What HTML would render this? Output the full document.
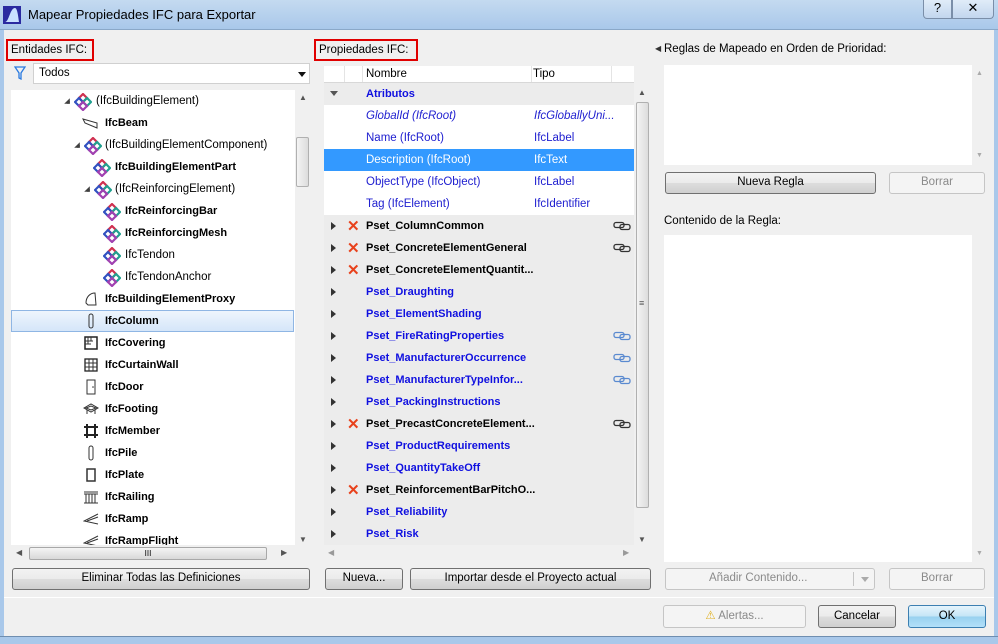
<!DOCTYPE html>
<html><head><meta charset="utf-8"><style>
*{box-sizing:border-box;margin:0;padding:0}
body{width:998px;height:644px;overflow:hidden;background:#f0f0f0;font-family:"Liberation Sans",sans-serif;font-size:11.5px;color:#000;position:relative}
.a{position:absolute;white-space:nowrap}
.title{left:0;top:0;width:998px;height:30px;background:linear-gradient(#c4daf0,#a9c8ea);border-bottom:1px solid #8aa8c8}
.red{border:2px solid #e00000;background:#f0f0f0;padding:3px 3px;font-size:11.5px;white-space:nowrap;overflow:hidden}
.btn{border:1px solid #707070;border-radius:3px;background:linear-gradient(#f2f2f2 0%,#ebebeb 50%,#dddddd 51%,#cfcfcf 100%);text-align:center;line-height:19px}
.dis{border:1px solid #c5c5c5;border-radius:3px;background:#f4f4f4;color:#8a8a8a;text-align:center;line-height:19px}
.white{background:#fff}
.t{position:absolute;white-space:nowrap;line-height:22px;height:22px}
.b{font-weight:bold;font-size:11px}
.tri{position:absolute;width:0;height:0;border-left:4px solid transparent;border-top:4px solid transparent;border-bottom:4px solid #404040;border-right:4px solid #404040;transform:scale(.7)}
.ic{position:absolute;width:16px;height:16px}
.ptri{position:absolute;width:0;height:0;border-top:4px solid transparent;border-bottom:4px solid transparent;border-left:5px solid #333}
.x{position:absolute;color:#e8421c;font-weight:bold;font-size:15px}
.blue{color:#1010e0}
.link{position:absolute}
.sb{background:#f0f0f0}
</style></head><body>
<div class="a title"></div>
<svg class="a" style="left:3px;top:6px" width="18" height="18"><rect width="18" height="18" fill="#2a2aa0"/><path d="M2 16 C6 16 7 2 12 2 C14 2 15 8 16 16Z" fill="#c8e0ff"/></svg>
<div class="a" style="left:28px;top:7px;font-size:13px">Mapear Propiedades IFC para Exportar</div>
<div class="a" style="left:923px;top:0;width:29px;height:19px;border:1px solid #7a8ea8;border-top:none;border-radius:0 0 0 4px;text-align:center;font-size:13px;background:linear-gradient(#e0ecf8,#c2d6ee)">?</div>
<div class="a" style="left:952px;top:0;width:42px;height:19px;border:1px solid #7a8ea8;border-top:none;border-radius:0 0 4px 0;text-align:center;font-size:13px;background:linear-gradient(#e0ecf8,#c2d6ee)">✕</div>
<div class="a" style="left:0;top:30px;width:4px;height:614px;background:#a9c8ea"></div>
<div class="a" style="left:994px;top:30px;width:4px;height:614px;background:#a9c8ea"></div>
<div class="a" style="left:0;top:636px;width:998px;height:8px;background:#a9c8ea;border-top:1px solid #6f8eb0"></div>

<!-- LEFT -->
<div class="a red" style="left:6px;top:39px;width:88px;height:22px">Entidades IFC:</div>
<svg class="a" style="left:14px;top:66px" width="12" height="14"><path d="M1 1H11L7 7V13L5 12V7Z" fill="none" stroke="#2a7ae0" stroke-width="1.3"/></svg>
<div class="a white" style="left:33px;top:63px;width:277px;height:21px;border:1px solid #d0d0d0;padding:3px 5px">Todos</div>
<div class="a" style="left:298px;top:72px;border-left:4px solid transparent;border-right:4px solid transparent;border-top:5px solid #111"></div>
<div class="a white" style="left:11px;top:90px;width:284px;height:455px;overflow:hidden" id="treebox"></div>
<div class="a sb" style="left:295px;top:90px;width:15px;height:455px"></div>
<div class="a" style="left:296px;top:137px;width:13px;height:50px;border:1px solid #b0b0b0;border-radius:2px;background:linear-gradient(90deg,#f4f4f4,#dcdcdc)"></div>
<div class="a" style="left:299px;top:93px;font-size:8px;color:#555">▲</div>
<div class="a" style="left:299px;top:535px;font-size:8px;color:#555">▼</div>
<div class="a sb" style="left:11px;top:545px;width:299px;height:16px"></div>
<div class="a" style="left:29px;top:547px;width:238px;height:13px;border:1px solid #a8a8a8;border-radius:2px;background:linear-gradient(#f4f4f4,#d8d8d8);text-align:center;font-size:8px;line-height:11px">III</div>
<div class="a" style="left:16px;top:548px;font-size:8px;color:#555">◀</div>
<div class="a" style="left:281px;top:548px;font-size:8px;color:#555">▶</div>
<div class="a btn" style="left:12px;top:568px;width:298px;height:22px">Eliminar Todas las Definiciones</div>

<!-- MIDDLE -->
<div class="a red" style="left:314px;top:39px;width:104px;height:22px">Propiedades IFC:</div>
<div class="a white" style="left:324px;top:66px;width:310px;height:17px;border-bottom:1px solid #d8d8d8"></div>
<div class="a" style="left:344px;top:66px;width:1px;height:16px;background:#e4e4e4"></div>
<div class="a" style="left:362px;top:66px;width:1px;height:16px;background:#e4e4e4"></div>
<div class="a" style="left:531px;top:66px;width:1px;height:16px;background:#e4e4e4"></div>
<div class="a" style="left:611px;top:66px;width:1px;height:16px;background:#e4e4e4"></div>
<div class="a" style="left:366px;top:68px">Nombre</div>
<div class="a" style="left:533px;top:68px">Tipo</div>
<div class="a" style="left:324px;top:83px;width:310px;height:462px;background:#ececec"></div>
<div class="a white" style="left:324px;top:105px;width:310px;height:110px"></div>
<div class="a" style="left:324px;top:149px;width:310px;height:22px;background:#3399ff"></div>
<div class="a sb" style="left:634px;top:83px;width:16px;height:462px"></div>
<div class="a" style="left:636px;top:102px;width:13px;height:406px;border:1px solid #b0b0b0;border-radius:2px;background:linear-gradient(90deg,#f4f4f4,#dcdcdc)"></div>
<div class="a" style="left:639px;top:298px;font-size:9px;color:#555">≡</div>
<div class="a" style="left:638px;top:88px;font-size:8px;color:#555">▲</div>
<div class="a" style="left:638px;top:535px;font-size:8px;color:#555">▼</div>
<div class="a sb" style="left:324px;top:545px;width:326px;height:16px"></div>
<div class="a" style="left:328px;top:548px;font-size:8px;color:#999">◀</div>
<div class="a" style="left:623px;top:548px;font-size:8px;color:#999">▶</div>
<div id="props"></div>
<div class="a btn" style="left:325px;top:568px;width:78px;height:22px">Nueva...</div>
<div class="a btn" style="left:410px;top:568px;width:241px;height:22px">Importar desde el Proyecto actual</div>

<!-- RIGHT -->
<div class="a" style="left:655px;top:44px;font-size:8px;color:#333">◀</div>
<div class="a" style="left:664px;top:43px">Reglas de Mapeado en Orden de Prioridad:</div>
<div class="a white" style="left:664px;top:65px;width:308px;height:100px"></div>
<div class="a sb" style="left:972px;top:65px;width:14px;height:100px"></div>
<div class="a" style="left:976px;top:70px;font-size:7px;color:#aaa">▲</div>
<div class="a" style="left:976px;top:152px;font-size:7px;color:#aaa">▼</div>
<div class="a btn" style="left:665px;top:172px;width:211px;height:22px">Nueva Regla</div>
<div class="a dis" style="left:889px;top:172px;width:96px;height:22px">Borrar</div>
<div class="a" style="left:664px;top:215px">Contenido de la Regla:</div>
<div class="a white" style="left:664px;top:235px;width:308px;height:327px"></div>
<div class="a sb" style="left:972px;top:235px;width:14px;height:327px"></div>
<div class="a" style="left:976px;top:550px;font-size:7px;color:#aaa">▼</div>
<div class="a dis" style="left:665px;top:568px;width:210px;height:22px;text-align:left;padding-left:43px">Añadir Contenido...</div>
<div class="a" style="left:853px;top:572px;width:1px;height:14px;background:#c5c5c5"></div>
<div class="a" style="left:861px;top:577px;border-left:4px solid transparent;border-right:4px solid transparent;border-top:5px solid #aaa"></div>
<div class="a dis" style="left:889px;top:568px;width:96px;height:22px">Borrar</div>

<div class="a" style="left:4px;top:597px;width:990px;height:1px;background:#a0a0a0;border-bottom:1px solid #fff"></div>
<div class="a dis" style="left:663px;top:605px;width:143px;height:23px;line-height:21px"><span style="color:#e0b020">⚠</span> Alertas...</div>
<div class="a btn" style="left:818px;top:605px;width:78px;height:23px;line-height:21px">Cancelar</div>
<div class="a btn" style="left:908px;top:605px;width:78px;height:23px;line-height:21px;border-color:#3c7fb1;background:linear-gradient(#e5f4fc,#c4e5f6 50%,#98d1ef 51%,#b3e0f9)">OK</div>

<script>
var T=document.getElementById('treebox'),h='';
var ifc='<svg width="18" height="18" viewBox="0 0 18 18"><path d="M9 1L13 5L9 9L5 5Z" fill="none" stroke="#d03050" stroke-width="2.2"/><path d="M5 5L9 9L5 13L1 9Z" fill="none" stroke="#3050c0" stroke-width="2.2"/><path d="M13 5L17 9L13 13L9 9Z" fill="none" stroke="#20a090" stroke-width="2.2"/><path d="M9 9L13 13L9 17L5 13Z" fill="none" stroke="#a040b0" stroke-width="2.2"/></svg>';
var icons={
Beam:'<path d="M1 4L15 8L15 13L3 8Z" fill="none" stroke="#333"/>',
Proxy:'<path d="M3 12C3 6 7 2 12 2L13 14L5 14Z" fill="none" stroke="#333"/>',
Column:'<rect x="6" y="1" width="4" height="14" rx="2" fill="none" stroke="#333"/>',
Covering:'<rect x="2" y="2" width="12" height="12" fill="none" stroke="#222" stroke-width="1.5"/><path d="M2 6H10M2 9H8M5 2V9M8 2V6" stroke="#333"/>',
CurtainWall:'<rect x="2" y="2" width="12" height="12" fill="none" stroke="#222" stroke-width="1.3"/><path d="M2 6H14M2 10H14M6 2V14M10 2V14" stroke="#333"/>',
Door:'<rect x="4" y="1" width="8" height="14" fill="none" stroke="#333"/><circle cx="10" cy="8" r=".8" fill="#333"/>',
Footing:'<path d="M1 7L8 3L15 7L8 11Z" fill="none" stroke="#333"/><path d="M3 7L8 5L13 7L8 9Z" fill="none" stroke="#333"/><path d="M4 9V13M12 9V13" stroke="#333"/>',
Member:'<path d="M4 1V15M12 1V15M1 4H15M1 12H15" stroke="#222" stroke-width="2"/>',
Pile:'<rect x="6" y="1" width="4" height="14" rx="2" fill="none" stroke="#333"/>',
Plate:'<path d="M4 2H12V14H4Z" fill="none" stroke="#333" stroke-width="1.5"/>',
Railing:'<path d="M1 3H15M1 5H15M3 5V14M6 5V14M9 5V14M12 5V14M1 14H15" stroke="#333"/>',
Ramp:'<path d="M15 3L1 10L15 13M15 6L4 10" fill="none" stroke="#333"/>',
RampFlight:'<path d="M15 3L1 10L15 13M15 6L4 10" fill="none" stroke="#333"/>'};
var rows=[[52,63,85,'(IfcBuildingElement)',0,1],[0,71,94,'IfcBeam',1,'Beam'],[62,73,94,'(IfcBuildingElementComponent)',0,1],[0,82,104,'IfcBuildingElementPart',1,1],[72,83,104,'(IfcReinforcingElement)',0,1],[0,92,114,'IfcReinforcingBar',1,1],[0,92,114,'IfcReinforcingMesh',1,1],[0,92,114,'IfcTendon',0,1],[0,92,114,'IfcTendonAnchor',0,1],
[0,72,94,'IfcBuildingElementProxy',1,'Proxy'],[0,72,94,'IfcColumn',1,'Column'],[0,72,94,'IfcCovering',1,'Covering'],[0,72,94,'IfcCurtainWall',1,'CurtainWall'],[0,72,94,'IfcDoor',1,'Door'],[0,72,94,'IfcFooting',1,'Footing'],[0,72,94,'IfcMember',1,'Member'],[0,72,94,'IfcPile',1,'Pile'],[0,72,94,'IfcPlate',1,'Plate'],[0,72,94,'IfcRailing',1,'Railing'],[0,72,94,'IfcRamp',1,'Ramp'],[0,72,94,'IfcRampFlight',1,'RampFlight']];
h+='<div style="position:absolute;left:0;top:220px;width:283px;height:22px;background:linear-gradient(#eef5fd,#d5e6f9);border:1px solid #8fb6e4"></div>';
rows.forEach(function(r,i){var y=i*22;
 if(r[0])h+='<div class="tri" style="left:'+r[0]+'px;top:'+(y+7)+'px"></div>';
 var ic=r[5]===1?ifc:'<svg width="16" height="16">'+icons[r[5]]+'</svg>';
 h+='<div class="ic" style="left:'+r[1]+'px;top:'+(y+3)+'px">'+ic+'</div>';
 h+='<div class="t'+(r[4]?' b':'')+'" style="left:'+r[2]+'px;top:'+y+'px">'+r[3]+'</div>';});
T.innerHTML=h;
var P=document.getElementById('props');h='';
h+='<div class="a" style="left:330px;top:91px;border-left:4px solid transparent;border-right:4px solid transparent;border-top:5px solid #555"></div><div class="t b blue" style="left:366px;top:83px">Atributos</div>';
var at=[['GlobalId (IfcRoot)','IfcGloballyUni...',1],['Name (IfcRoot)','IfcLabel'],['Description (IfcRoot)','IfcText'],['ObjectType (IfcObject)','IfcLabel'],['Tag (IfcElement)','IfcIdentifier']];
at.forEach(function(a,i){var y=105+i*22,c=i==2?'color:#fff':'color:#2020d0';h+='<div class="t" style="left:366px;top:'+y+'px;'+c+(a[2]?';font-style:italic':'')+'">'+a[0]+'</div><div class="t" style="left:534px;top:'+y+'px;'+c+(a[2]?';font-style:italic':'')+'">'+a[1]+'</div>';});
var ps=[['Pset_ColumnCommon',1,1],['Pset_ConcreteElementGeneral',1,1],['Pset_ConcreteElementQuantit...',1,0],['Pset_Draughting',0,0],['Pset_ElementShading',0,0],['Pset_FireRatingProperties',0,2],['Pset_ManufacturerOccurrence',0,2],['Pset_ManufacturerTypeInfor...',0,2],['Pset_PackingInstructions',0,0],['Pset_PrecastConcreteElement...',1,1],['Pset_ProductRequirements',0,0],['Pset_QuantityTakeOff',0,0],['Pset_ReinforcementBarPitchO...',1,0],['Pset_Reliability',0,0],['Pset_Risk',0,0]];
ps.forEach(function(p,i){var y=215+i*22;
 h+='<div class="ptri" style="left:331px;top:'+(y+7)+'px"></div>';
 if(p[1])h+='<div class="x" style="left:347px;top:'+(y+2)+'px">✕</div>';
 h+='<div class="t b'+(p[1]?'':' blue')+'" style="left:366px;top:'+y+'px">'+p[0]+'</div>';
 if(p[2]){var c=p[2]==2?'#5a8ad0':'#333';h+='<svg class="link" style="left:613px;top:'+(y+6)+'px" width="18" height="10"><rect x="1" y="1.5" width="10" height="5" rx="2" fill="none" stroke="'+c+'" stroke-width="1.3"/><rect x="7" y="3.5" width="10" height="5" rx="2" fill="none" stroke="'+c+'" stroke-width="1.3"/></svg>';}});
P.innerHTML=h;
</script>
</body></html>
